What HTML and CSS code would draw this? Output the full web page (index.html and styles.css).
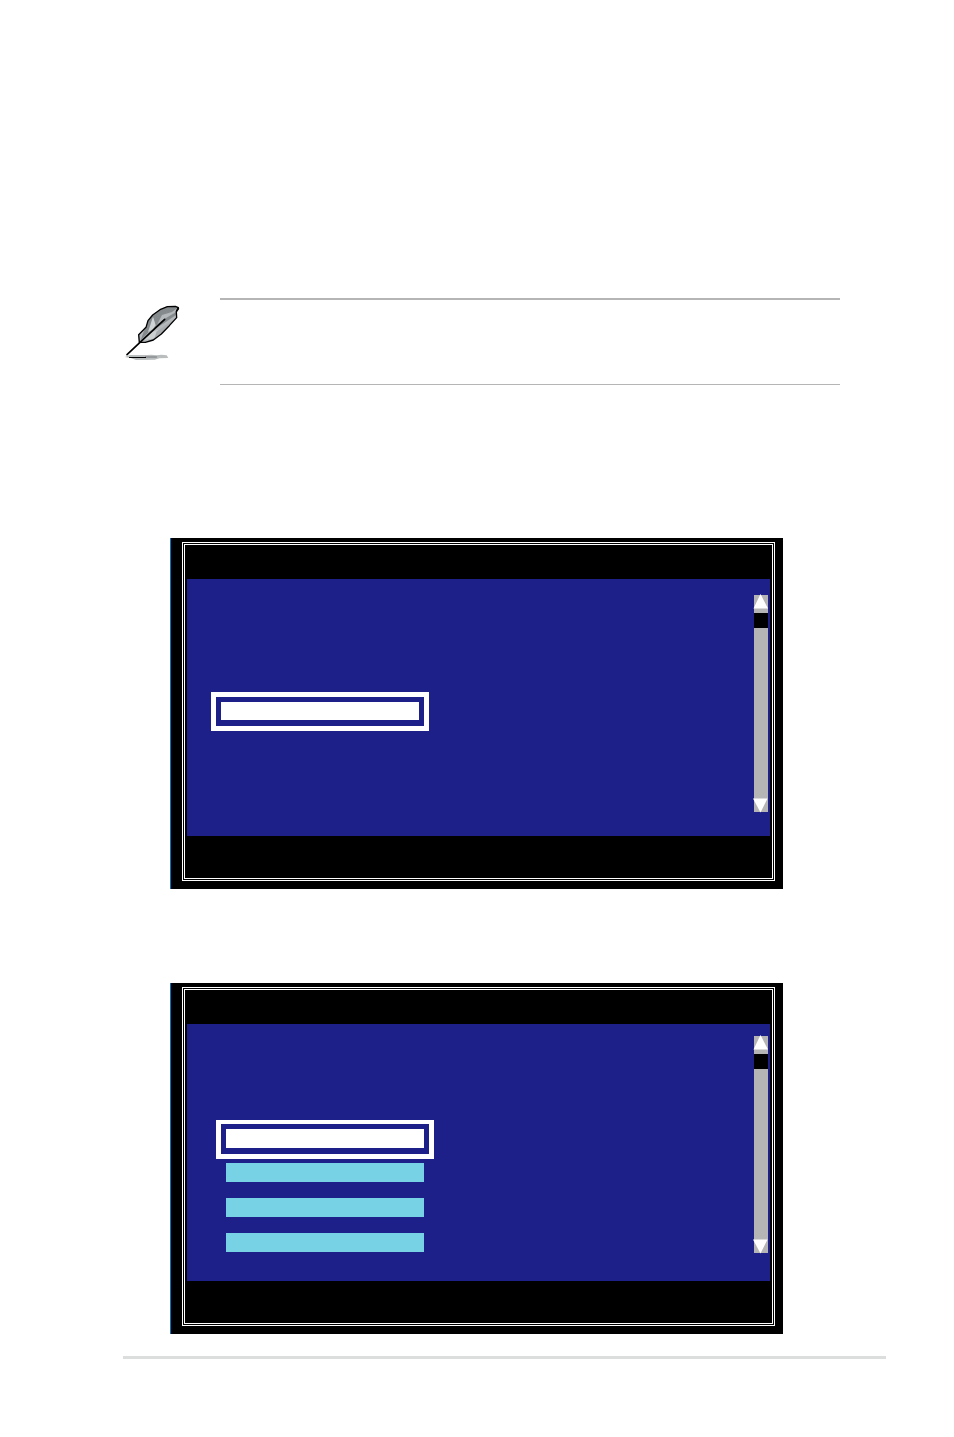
FILE: index.html
```
<!DOCTYPE html>

<html lang="en">
  <head>
    <meta charset="utf-8" />
    <meta name="viewport" content="width=device-width, initial-scale=1" />
    <title></title>
    <link rel="stylesheet" href="styles.css">
  </head>
  <body>
    <main class="page">
      <section class="note">
        <svg class="feather" viewBox="0 0 195 192" aria-hidden="true">
          <path fill="#b9bdbd" d="M14 171L30 165L82 165L94 164L110 166L124 164L140 166L145 174L118 175L104 179L48 180L32 174Z" />
          <path fill="#8a8e90" d="M75 169H112L110 173H75Z" />
          <path fill="#000" d="M27 171H78V174H27Z" />
          <path fill="#b4b8ba" d="M57 128L56 104L78 82L84 62L98 45L120 29L142 20L166 18L175 24L169 35L170 53L148 77L124 102L100 120L76 127Z" />
          <path fill="#858a8d" d="M78 82L84 62L98 45L120 29L142 20L166 18L172 24L156 36L126 45L108 80L100 54L90 92L62 121L72 92Z" />
          <path fill="#d0d3d4" d="M99 50L84 96L108 80Z" />
          <path fill="#858a8d" d="M105 78L132 58L168 36L169 44L134 68L98 90Z" />
          <path fill="#cdd0d1" d="M66 121L94 96L120 88L148 72L124 96L98 116Z" />
          <path fill="#a8acae" d="M110 94L134 78L168 54L126 98L104 114Z" />
          <path fill="none" stroke="#000" stroke-width="4" stroke-linejoin="round" d="M58 127L56 104L78 82L84 62L98 45L120 29L142 20L166 19L175 23L169 35L170 53L148 77L124 102L100 120L76 127Z" />
          <path fill="none" stroke="#000" stroke-width="5" stroke-linecap="round" d="M21 164L60 127L134 58M175 26L170 33" />
        </svg>
        <div class="note-text"></div>
      </section>

      <section class="screen">
        <div class="frame">
          <div class="panel">
            <ul class="menu">
              <li class="selected"><span class="item"></span></li>
            </ul>
            <div class="scrollbar">
              <svg class="arrow" viewBox="0 0 28 28" aria-hidden="true"><path d="M13 -2L28 27H-1Z" /></svg>
              <div class="thumb"></div>
              <svg class="arrow arrow-down" viewBox="0 0 28 28" aria-hidden="true"><path d="M-2 1H27L13 29Z" /></svg>
            </div>
          </div>
        </div>
      </section>

      <section class="screen">
        <div class="frame">
          <div class="panel panel-list">
            <ul class="menu">
              <li class="selected"><span class="item"></span></li>
              <li><span class="item"></span></li>
              <li><span class="item"></span></li>
              <li><span class="item"></span></li>
            </ul>
            <div class="scrollbar">
              <svg class="arrow" viewBox="0 0 28 28" aria-hidden="true"><path d="M13 -2L28 27H-1Z" /></svg>
              <div class="thumb"></div>
              <svg class="arrow arrow-down" viewBox="0 0 28 28" aria-hidden="true"><path d="M-2 1H27L13 29Z" /></svg>
            </div>
          </div>
        </div>
      </section>

      <hr class="footer-line">
    </main>
  </body>
</html>
```

FILE: styles.css
```
* {
  box-sizing: border-box;
}

body {
  margin: 0;
  background: #fff;
  font-family: "Liberation Sans", Arial, sans-serif;
}

.page {
  padding: 298px 68px 78px 123px;
}

.note {
  display: flex;
  gap: 35px;
  margin-right: 46px;
}

.feather {
  flex: none;
  width: 65px;
  height: 64px;
  margin-top: 2px;
  margin-left: -3px;
}

.note-text {
  flex: 1;
  min-height: 87px;
  border-top: 2px solid #b5b5b6;
  border-bottom: 1px solid #b5b5b6;
}

.screen {
  margin: 153px 103px 0 47px;
  padding: 4px 8px 8px 11px;
  background: #000;
  border-left: 1px solid #0075c2;
}

.screen + .screen {
  margin-top: 94px;
}

/* double line around each screen */
.frame {
  padding: 34px 2px 42px;
  border: 3px double #fff;
}

.panel {
  display: flex;
  justify-content: space-between;
  min-height: 257px;
  padding: 16px 2px 24px 24px;
  background: #1d2088;
}

.menu {
  width: 218px;
  margin: 97px 0 0;
  padding: 0;
  list-style: none;
}

.menu li {
  padding: 0 10px;
}

.menu .selected {
  padding: 5px 5px 6px;
  border: 5px solid #fff;
}

.item {
  display: block;
  height: 18px;
  background: #78d2e6;
}

.selected .item {
  background: #fff;
}

.panel-list {
  padding: 12px 2px 28px 29px;
}

.panel-list .menu {
  display: grid;
  gap: 16px;
  align-content: start;
  margin-top: 84px;
}

.panel-list .item {
  height: 19px;
}

.panel-list .selected {
  margin-bottom: -12px;
  border-top-width: 4px;
}

.scrollbar {
  display: flex;
  flex-direction: column;
  width: 14px;
  background: #b5b5b6;
}

.arrow {
  width: 14px;
  height: 14px;
  fill: #fff;
  overflow: visible;
}

.thumb {
  height: 15px;
  margin-top: 4px;
  background: #000;
}

.arrow-down {
  margin-top: auto;
}

.footer-line {
  height: 3px;
  margin: 22px 0 0;
  border: 0;
  background: #dcdddd;
}
```
